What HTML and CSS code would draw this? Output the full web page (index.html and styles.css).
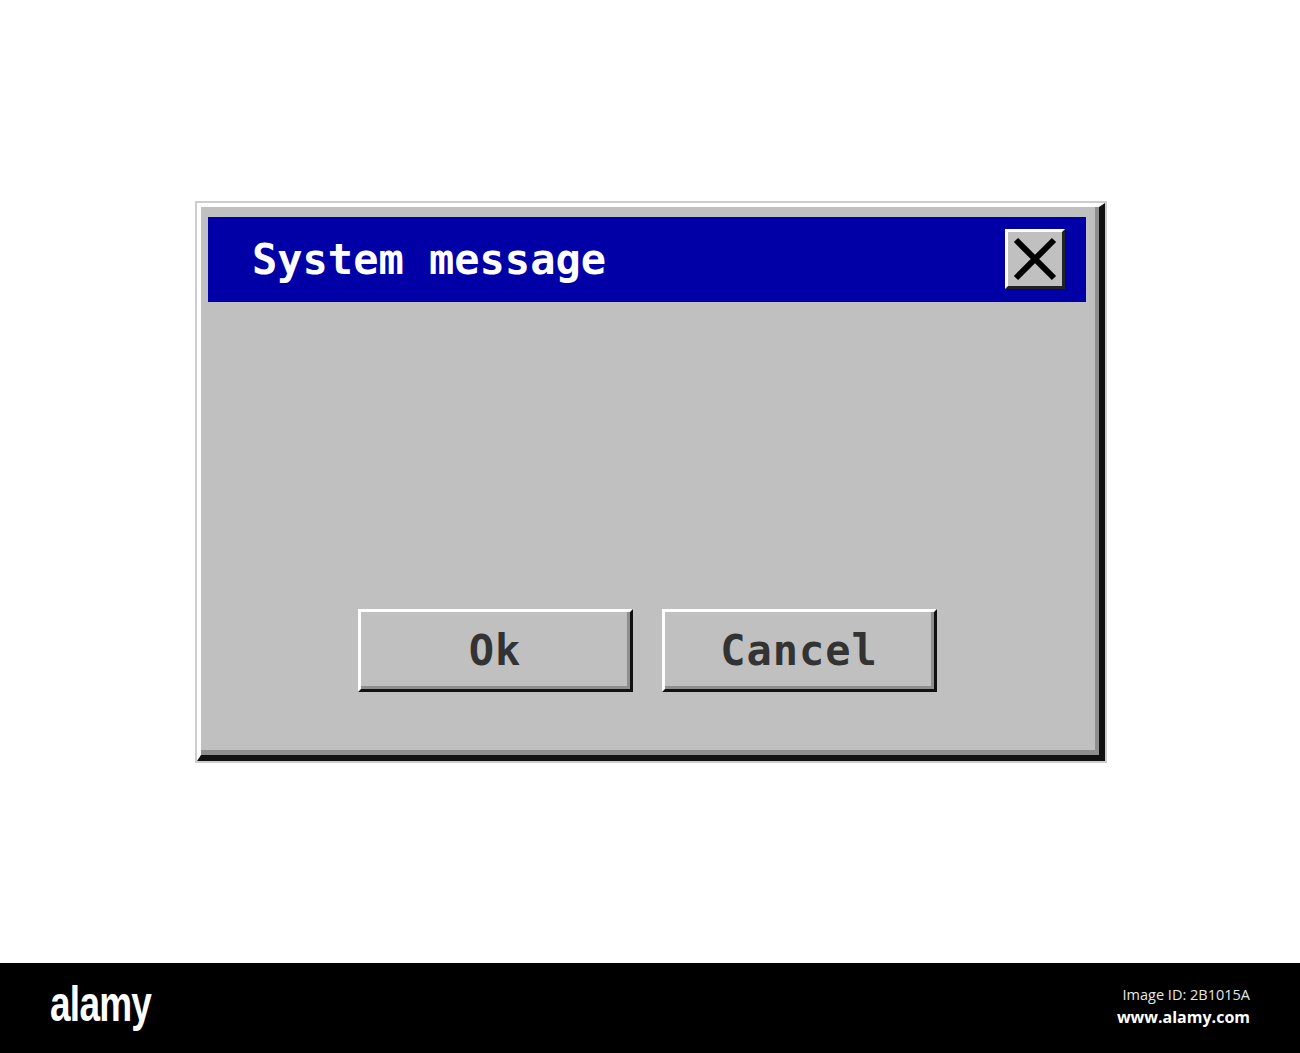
FILE: index.html
```html
<!DOCTYPE html>
<html lang="en">
<head>
  <meta charset="UTF-8">
  <meta name="viewport" content="width=device-width, initial-scale=1.0">
  <title>System message</title>
  <link rel="stylesheet" href="styles.css">
</head>
<body>
  <div class="stage">
    <div class="frame">
      <div class="dialog">
        <div class="titlebar">
          <span class="title">System message</span>
          <button class="close" aria-label="Close">
            <svg width="54" height="54" viewBox="0 0 54 54">
              <path d="M8 8 L46 46 M46 8 L8 46" stroke="#000" stroke-width="6" fill="none"/>
            </svg>
          </button>
        </div>
        <div class="actions">
          <button class="btn">Ok</button>
          <button class="btn">Cancel</button>
        </div>
      </div>
    </div>
  </div>

  <div class="footer">
    <div class="logo">alamy</div>
    <div class="meta">
      <div class="image-id">Image ID: 2B1015A</div>
      <div class="site">www.alamy.com</div>
    </div>
  </div>
</body>
</html>
```

FILE: styles.css
```css
body {
  margin: 0;
  padding: 0;
  background: #ffffff;
}
.stage {
  height: 963px;
  display: flex;
  align-items: center;
  justify-content: center;
}
.frame {
  width: 912px;
  height: 562px;
  box-sizing: border-box;
  border: 2px solid #cdcdcd;
  margin-left: 2px;
}
.dialog {
  height: 100%;
  box-sizing: border-box;
  background: #c0c0c0;
  border-style: solid;
  border-width: 4px 6px 6px 4px;
  border-color: #ffffff #111111 #111111 #ffffff;
  box-shadow: inset -4px -5px 0 #8e8e8e;
  padding: 10px 13px 0 7px;
}
.titlebar {
  height: 85px;
  background: #0000a6;
  display: flex;
  align-items: center;
  justify-content: space-between;
  padding: 0 21px 0 44px;
}
.title {
  font-family: "DejaVu Sans Mono", monospace;
  font-weight: bold;
  font-size: 42px;
  color: #ffffff;
}
.close {
  width: 60px;
  height: 60px;
  box-sizing: border-box;
  padding: 0;
  background: #c0c0c0;
  border-style: solid;
  border-width: 3px;
  border-color: #ffffff #222222 #222222 #ffffff;
  display: flex;
}
.actions {
  display: flex;
  justify-content: center;
  gap: 29px;
  margin-top: 307px;
}
.btn {
  width: 275px;
  height: 83px;
  box-sizing: border-box;
  background: #c0c0c0;
  border-style: solid;
  border-width: 3px;
  border-color: #ffffff #111111 #111111 #ffffff;
  box-shadow: inset -3px -3px 0 #8e8e8e;
  font-family: "DejaVu Sans Mono", monospace;
  font-weight: bold;
  font-size: 42px;
  letter-spacing: 1px;
  color: #333333;
  padding: 0;
}
.footer {
  height: 90px;
  background: #000000;
  display: flex;
  justify-content: space-between;
  align-items: flex-start;
  padding: 0 50px;
}
.logo {
  font-family: "Liberation Sans", sans-serif;
  font-weight: bold;
  font-size: 50px;
  line-height: 50px;
  letter-spacing: -1px;
  color: #ffffff;
  margin-top: 16px;
  transform: scaleX(0.74);
  transform-origin: left center;
}
.meta {
  text-align: right;
  font-family: "Open Sans", sans-serif;
  margin-top: 22px;
}
.image-id {
  font-size: 14.5px;
  line-height: 20px;
  color: #e6e6e6;
}
.site {
  font-size: 16px;
  font-weight: bold;
  line-height: 24px;
  color: #ffffff;
}
```
